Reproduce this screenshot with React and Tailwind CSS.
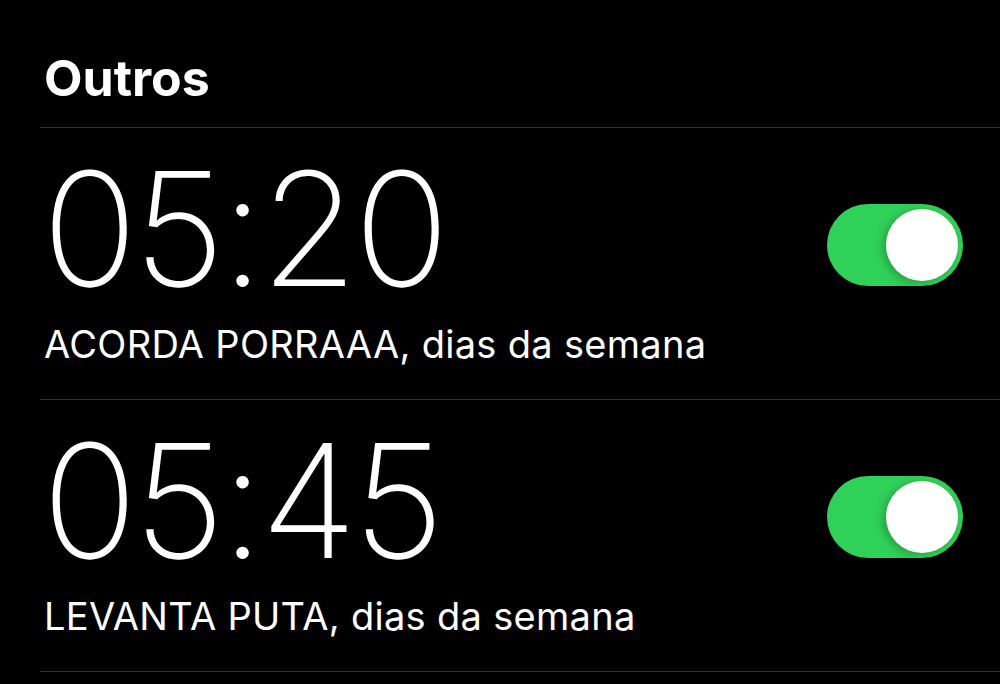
import React from 'react';

const alarms = [
  { time: '05:20', label: 'ACORDA PORRAAA, dias da semana', on: true },
  { time: '05:45', label: 'LEVANTA PUTA, dias da semana', on: true },
];

function Toggle({ on }) {
  return (
    <div
      className={`w-[136px] h-[82px] rounded-full p-[5px] flex items-center ${
        on ? 'bg-[#30d158] justify-end' : 'bg-[#39393d] justify-start'
      }`}
    >
      <div className="w-[72px] h-[72px] rounded-full bg-white shadow-[-3px_2px_8px_rgba(0,0,0,0.25)]" />
    </div>
  );
}

function AlarmRow({ alarm }) {
  return (
    <div className="border-t border-[#333335] flex justify-between">
      <div className="flex flex-col">
        <span className="mt-[22px] text-[158px] leading-none font-extralight tracking-[-4px] ml-[2px]">
          {alarm.time}
        </span>
        <span className="mt-[17px] mb-[36px] text-[38px] leading-none tracking-[0.3px] ml-[4px]">
          {alarm.label}
        </span>
      </div>
      <div className="mt-[76px] mr-[37px]">
        <Toggle on={alarm.on} />
      </div>
    </div>
  );
}

export default function App() {
  return (
    <div
      className="w-[1000px] h-[684px] overflow-hidden bg-black text-white"
      style={{ fontFamily: 'Inter, "Noto Sans", sans-serif' }}
    >
      <div className="pl-10">
        <h2 className="pt-[53px] pb-[24px] ml-[4px] text-[50px] leading-none font-bold">
          Outros
        </h2>
        {alarms.map((a) => (
          <AlarmRow key={a.time} alarm={a} />
        ))}
        <div className="border-t border-[#333335]" />
      </div>
    </div>
  );
}
